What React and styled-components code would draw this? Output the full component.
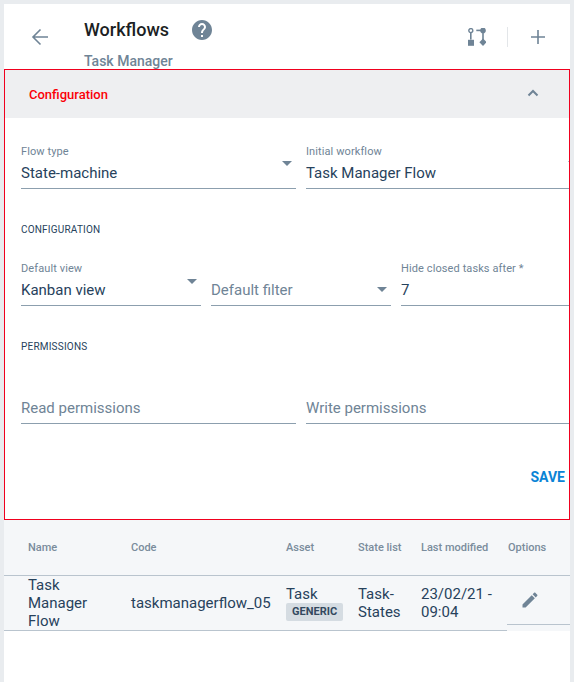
import React from "react";
import styled, { createGlobalStyle } from "styled-components";

const Global = createGlobalStyle`
  html, body { margin: 0; padding: 0; height: 100%; background: #e9ecef; overflow: hidden; }
  * { box-sizing: border-box; }
  body { font-family: Roboto, "Liberation Sans", sans-serif; }
`;
const Page = styled.div`
  margin: 4px 4px 0;
  width: 566px;
  height: 678px;
  background: #fff;
  display: flex;
  flex-direction: column;
`;
const Header = styled.header`
  height: 65px;
  display: flex;
  overflow: hidden;
  flex-shrink: 0;
`;
const BackButton = styled.div`
  width: 80px;
  padding: 21px 0 0 24px;
  color: #6f8496;
`;
const Titles = styled.div`
  flex: 1;
  padding-top: 13px;
`;
const TitleRow = styled.div`
  display: flex;
  align-items: center;
  gap: 21px;
  height: 26px;
`;
const Title = styled.h1`
  margin: 0;
  font-size: 18px;
  line-height: 26px;
  font-weight: 500;
  color: #1c1f24;
`;
const Subtitle = styled.div`
  margin-top: 10px;
  font-size: 14px;
  line-height: 16px;
  font-weight: 500;
  color: #6f8496;
`;
const Actions = styled.div`
  display: flex;
  align-items: flex-start;
  padding: 21px 20px 0 0;
  color: #6f8496;
`;
const FlowSvg = styled.svg`
  margin-top: 3px;
`;
const Divider = styled.span`
  width: 1px;
  height: 20px;
  margin: 2px 18px 0 21px;
  background: #e3e6e9;
`;
const Section = styled.section`
  height: 451px;
  flex-shrink: 0;
  border: 1px solid #f0001e;
  overflow: hidden;
`;
const AccordionHead = styled.div`
  height: 48px;
  background: #eeeff1;
  display: flex;
  align-items: center;
  justify-content: space-between;
  padding: 0 28px 0 24px;
  color: #6f8496;
`;
const AccordionTitle = styled.span`
  font-size: 13px;
  font-weight: 500;
  color: #fb0007;
`;
const Body = styled.div`
  padding: 0 0 0 16px;
`;
const FieldRow = styled.div`
  display: flex;
  gap: 10px;
  margin-top: ${p => p.$top}px;
  width: 548px;
`;
const Field = styled.div`
  position: relative;
  flex: ${p => p.$flex};
  min-width: 0;
  height: 44px;
  border-bottom: 1px solid #8c9fae;
`;
const Label = styled.div`
  position: absolute;
  top: 0;
  left: 0;
  font-size: 11px;
  line-height: 13px;
  letter-spacing: 0.1px;
  color: #6f8496;
  white-space: nowrap;
`;
const Value = styled.div`
  position: absolute;
  left: 0;
  top: 18px;
  font-size: 15px;
  line-height: 20px;
  color: ${p => (p.$placeholder ? "#6f8496" : "#27425c")};
  white-space: nowrap;
`;
const Caret = styled.span`
  position: absolute;
  right: ${p => p.$right ?? 4}px;
  top: ${p => p.$top ?? 16}px;
  width: 0;
  height: 0;
  border-left: 5px solid transparent;
  border-right: 5px solid transparent;
  border-top: 5px solid #6f8496;
`;
const Overline = styled.div`
  margin-top: ${p => p.$top}px;
  font-size: 10px;
  line-height: 12px;
  letter-spacing: 0.2px;
  color: #27425c;
`;
const Footer = styled.div`
  display: flex;
  justify-content: flex-end;
  padding-right: 4px;
  margin-top: 45px;
`;
const Save = styled.button`
  border: 0;
  background: none;
  padding: 0;
  font: 700 14px/16px Roboto, sans-serif;
  color: #0a84d6;
`;
const Table = styled.div`
  background: #f5f7f9;
`;
const Row = styled.div`
  display: grid;
  grid-template-columns: 103px 155px 72px 63px 87px 63px;
  padding-left: 24px;
  height: ${p => p.$h}px;
`;
const HeadRow = styled(Row)`
  border-bottom: 1px solid #b9c4ce;
`;
const Head = styled.div`
  padding-top: 21px;
  font-size: 11px;
  line-height: 13px;
  font-weight: 500;
  color: #7a8c9c;
  white-space: nowrap;
`;
const BodyRow = styled(Row)`
  position: relative;
`;
const RowRule = styled.span`
  position: absolute;
  left: 0;
  bottom: 0;
  width: 503px;
  height: 1px;
  background: #b9c4ce;
`;
const OptionsRule = styled.span`
  position: absolute;
  left: 503px;
  right: 0;
  top: 48px;
  height: 1px;
  background: #b9c4ce;
`;
const Cell = styled.div`
  display: flex;
  flex-direction: column;
  justify-content: center;
  font-size: 15px;
  line-height: 18px;
  color: #27425c;
  padding-right: ${p => p.$pad ?? 4}px;
  height: 54px;
`;
const Badge = styled.span`
  align-self: flex-start;
  padding: 0 6px;
  height: 18px;
  border-radius: 2px;
  background: #d5dce2;
  font-size: 11px;
  line-height: 18px;
  font-weight: 700;
  color: #33495f;
`;
const IconCell = styled.div`
  height: 48px;
  padding: 14px 0 0 12px;
  color: #6f8496;
`;

const Arrow = () => (
  <svg width="24" height="24" viewBox="0 0 24 24" fill="none" stroke="currentColor" strokeWidth="1.6">
    <path d="M20 12H5M12.5 4.5 5 12l7.5 7.5" />
  </svg>
);
const Help = () => (
  <svg width="24" height="24" viewBox="0 0 24 24" fill="#6f8496">
    <path d="M12 2C6.48 2 2 6.48 2 12s4.48 10 10 10 10-4.48 10-10S17.52 2 12 2zm1 17h-2v-2h2v2zm2.07-7.75l-.9.92C13.45 12.9 13 13.5 13 15h-2v-.5c0-1.1.45-2.1 1.17-2.83l1.24-1.26c.37-.36.59-.86.59-1.41 0-1.1-.9-2-2-2s-2 .9-2 2H8c0-2.21 1.79-4 4-4s4 1.79 4 4c0 .88-.36 1.68-.93 2.25z" />
  </svg>
);
const FlowIcon = () => (
  <FlowSvg width="18" height="18" viewBox="0 0 18 18" fill="currentColor">
    <circle cx="2.8" cy="2.6" r="2" fill="none" stroke="currentColor" strokeWidth="1.4" />
    <rect x="2" y="4.6" width="1.6" height="7" />
    <rect x="0" y="11.8" width="6" height="6" />
    <circle cx="15" cy="2.4" r="2.8" />
    <rect x="8.3" y="1.6" width="5" height="1.6" />
    <rect x="14.2" y="5" width="1.6" height="7" />
    <path d="M15 10.6 18.6 14.2 15 17.9 11.4 14.2z" />
  </FlowSvg>
);
const Plus = () => (
  <svg width="24" height="24" viewBox="0 0 24 24" fill="none" stroke="currentColor" strokeWidth="1.6">
    <path d="M12 5v14M5 12h14" />
  </svg>
);
const Chevron = () => (
  <svg width="16" height="16" viewBox="0 0 16 16" fill="none" stroke="currentColor" strokeWidth="2">
    <path d="M3.5 9.5 8 5l4.5 4.5" />
  </svg>
);
const Pencil = () => (
  <svg width="20" height="20" viewBox="0 0 24 24" fill="currentColor">
    <path d="M3 17.25V21h3.75L17.81 9.94l-3.75-3.75L3 17.25zM20.71 7.04c.39-.39.39-1.02 0-1.41l-2.34-2.34c-.39-.39-1.02-.39-1.41 0l-1.83 1.83 3.75 3.75 1.83-1.83z" />
  </svg>
);

export default function App() {
  return (
    <Page>
      <Global />
      <Header>
        <BackButton><Arrow /></BackButton>
        <Titles>
          <TitleRow>
            <Title>Workflows</Title>
            <Help />
          </TitleRow>
          <Subtitle>Task Manager</Subtitle>
        </Titles>
        <Actions>
          <FlowIcon />
          <Divider />
          <Plus />
        </Actions>
      </Header>
      <Section>
        <AccordionHead>
          <AccordionTitle>Configuration</AccordionTitle>
          <Chevron />
        </AccordionHead>
        <Body>
          <FieldRow $top={27}>
            <Field $flex="275 0 0">
              <Label>Flow type</Label>
              <Value>State-machine</Value>
              <Caret $right={4} />
            </Field>
            <Field $flex="263 0 0">
              <Label>Initial workflow</Label>
              <Value>Task Manager Flow</Value>
              <Caret $right={-9} />
            </Field>
          </FieldRow>
          <Overline $top={35}>CONFIGURATION</Overline>
          <FieldRow $top={26}>
            <Field $flex="180 0 0">
              <Label>Default view</Label>
              <Value>Kanban view</Value>
              <Caret $right={4} $top={17} />
            </Field>
            <Field $flex="180 0 0">
              <Value $placeholder>Default filter</Value>
              <Caret $right={4} $top={25} />
            </Field>
            <Field $flex="168 0 0">
              <Label>Hide closed tasks after *</Label>
              <Value>7</Value>
            </Field>
          </FieldRow>
          <Overline $top={35}>PERMISSIONS</Overline>
          <FieldRow $top={27}>
            <Field $flex="275 0 0">
              <Value $placeholder>Read permissions</Value>
            </Field>
            <Field $flex="263 0 0">
              <Value $placeholder>Write permissions</Value>
            </Field>
          </FieldRow>
          <Footer><Save>SAVE</Save></Footer>
        </Body>
      </Section>
      <Table>
        <HeadRow $h={56}>
          <Head>Name</Head>
          <Head>Code</Head>
          <Head>Asset</Head>
          <Head>State list</Head>
          <Head>Last modified</Head>
          <Head>Options</Head>
        </HeadRow>
        <BodyRow $h={55}>
          <Cell $pad={24}>Task Manager Flow</Cell>
          <Cell>taskmanagerflow_05</Cell>
          <Cell>Task<Badge>GENERIC</Badge></Cell>
          <Cell>Task-States</Cell>
          <Cell>23/02/21 - 09:04</Cell>
          <IconCell><Pencil /></IconCell>
          <RowRule />
          <OptionsRule />
        </BodyRow>
      </Table>
    </Page>
  );
}
